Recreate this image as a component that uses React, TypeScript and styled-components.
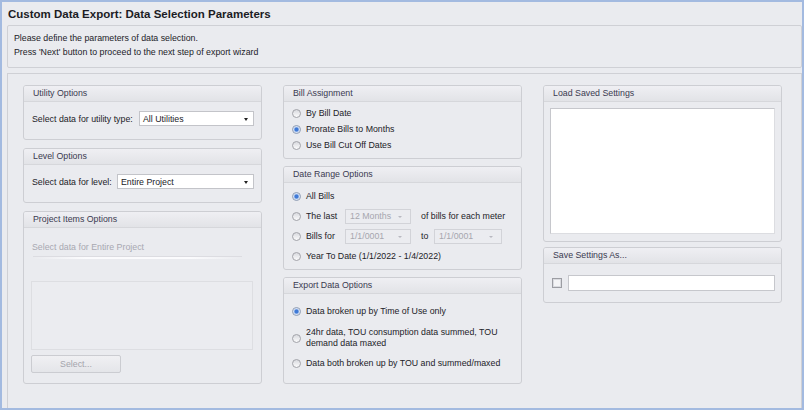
import { createGlobalStyle, styled } from 'styled-components';

const GlobalStyle = createGlobalStyle`
  html, body {
    margin: 0;
    padding: 0;
  }
  body {
    font-family: 'Liberation Sans', Arial, sans-serif;
    font-size: 8.8px;
    color: #222228;
    background: #eaebef;
  }
  * {
    box-sizing: border-box;
  }
`;

const Window = styled.div`
  width: 804px;
  height: 410px;
  border: 2px solid #a3bae0;
  background: #eaebef;
  display: flex;
  flex-direction: column;
  overflow: hidden;
`;

const TitleBar = styled.div`
  height: 23px;
  padding: 1px 0 0 6px;
  display: flex;
  align-items: center;
  font-size: 11.5px;
  font-weight: bold;
  color: #1c1c24;
`;

const Intro = styled.div`
  height: 43px;
  margin-left: 5px;
  padding: 5px 0 0 6px;
  border: 1px solid #cfd0d5;
  border-radius: 2px;
  line-height: 14px;
`;

const MainPanel = styled.div`
  flex: 1;
  margin: 5px 0 0 5px;
  padding: 11px 0 0 15px;
  border: 1px solid #cfd0d5;
  border-bottom: none;
  display: flex;
  align-items: flex-start;
  gap: 21px;
`;

const Column = styled.div<{ $gap: number }>`
  width: 239px;
  display: flex;
  flex-direction: column;
  gap: ${p => p.$gap}px;
`;

const GroupBox = styled.div<{ $h: number }>`
  height: ${p => p.$h}px;
  border: 1px solid #cdced3;
  border-radius: 3px;
  overflow: hidden;
  display: flex;
  flex-direction: column;
`;

const GroupHeader = styled.div`
  height: 16px;
  flex-shrink: 0;
  padding-left: 9px;
  line-height: 15px;
  border-bottom: 1px solid #d6d7db;
  background: linear-gradient(#efeff3, #e2e3e7);
  color: #3a3a50;
`;

const GroupBody = styled.div<{ $pad: string }>`
  flex: 1;
  padding: ${p => p.$pad};
  display: flex;
  flex-direction: column;
`;

const FieldRow = styled.div`
  height: 15px;
  display: flex;
  align-items: center;
  justify-content: space-between;
`;

const Select = styled.div<{ $w: number; $disabled?: boolean }>`
  position: relative;
  width: ${p => p.$w}px;
  height: 15px;
  flex-shrink: 0;
  display: flex;
  align-items: center;
  padding-left: ${p => (p.$disabled ? 4 : 3)}px;
  border: 1px solid ${p => (p.$disabled ? '#d2d3d8' : '#c3c4c9')};
  background: ${p => (p.$disabled ? '#ebecf0' : '#ffffff')};
  color: ${p => (p.$disabled ? '#a6a6ae' : '#222228')};

  &::after {
    content: '';
    position: absolute;
    right: ${p => (p.$disabled ? 8 : 5)}px;
    top: 6px;
    border-left: ${p => (p.$disabled ? 2 : 2.5)}px solid transparent;
    border-right: ${p => (p.$disabled ? 2 : 2.5)}px solid transparent;
    border-top: ${p => (p.$disabled ? 2 : 3)}px solid ${p => (p.$disabled ? '#b8b8c0' : '#222')};
  }
`;

const MutedText = styled.div`
  height: 12px;
  margin-left: 1px;
  line-height: 12px;
  color: #a8a8b1;
`;

const Separator = styled.div`
  height: 2px;
  width: 209px;
  margin: 4px 0 0 2px;
  background: linear-gradient(to right, rgba(255, 255, 255, 0), #fbfbfd 25%, #fbfbfd 75%, rgba(255, 255, 255, 0));
  box-shadow: 0 -1px 0 rgba(205, 206, 212, 0.5);
`;

const ItemsList = styled.div`
  height: 69px;
  margin-top: 22px;
  border: 1px solid #dddee2;
  background: #ebecf0;
`;

const Button = styled.div`
  width: 90px;
  height: 18px;
  margin-top: 5px;
  display: flex;
  align-items: center;
  justify-content: center;
  border: 1px solid #cbccd1;
  border-radius: 2px;
  background: linear-gradient(#f0f0f3, #e4e5e9);
  color: #a4a4ac;
`;

const OptionRow = styled.div<{ $h: number; $top?: number }>`
  min-height: ${p => p.$h}px;
  margin-top: ${p => p.$top ?? 0}px;
  display: flex;
  align-items: center;
  line-height: 11px;
  color: #222228;
`;

const Radio = styled.span<{ $on?: boolean }>`
  width: 9px;
  height: 9px;
  flex-shrink: 0;
  margin-right: 5px;
  border-radius: 50%;
  border: 1px solid ${p => (p.$on ? '#8d9bb3' : '#a2a3a9')};
  background: ${p =>
    p.$on
      ? 'radial-gradient(circle, #3f79d6 0, #3f79d6 1.6px, #a9c4ee 2.4px, #f3f5fa 3.5px)'
      : 'linear-gradient(#d9dadf, #fbfbfc)'};
`;

const RowLabel = styled.span<{ $w: number; $left?: number }>`
  width: ${p => p.$w}px;
  margin-left: ${p => p.$left ?? 0}px;
  flex-shrink: 0;
`;

const Trailing = styled.span`
  margin-left: 10px;
  white-space: nowrap;
`;

const SavedList = styled.div`
  height: 126px;
  border: 1px solid #c6c7cc;
  border-right-color: #dcdde1;
  border-bottom-color: #dcdde1;
  background: #ffffff;
`;

const SaveRow = styled.div`
  height: 16px;
  display: flex;
  align-items: center;
  gap: 6px;
`;

const Checkbox = styled.span`
  width: 10px;
  height: 10px;
  flex-shrink: 0;
  border: 1px solid #9c9da3;
  background: #f4f4f6;
  box-shadow: inset 0 0 0 1px #dadbe0;
`;

const TextInput = styled.div`
  flex: 1;
  height: 16px;
  border: 1px solid #c6c7cc;
  background: #ffffff;
`;

export default function App() {
  return (
    <>
      <GlobalStyle />
      <Window>
        <TitleBar>Custom Data Export: Data Selection Parameters</TitleBar>
        <Intro>
          <div>Please define the parameters of data selection.</div>
          <div>Press 'Next' button to proceed to the next step of export wizard</div>
        </Intro>
        <MainPanel>
          <Column $gap={8}>
            <GroupBox $h={55}>
              <GroupHeader>Utility Options</GroupHeader>
              <GroupBody $pad="9px 7px 0 8px">
                <FieldRow>
                  <span>Select data for utility type:</span>
                  <Select $w={115}>All Utilities</Select>
                </FieldRow>
              </GroupBody>
            </GroupBox>
            <GroupBox $h={55}>
              <GroupHeader>Level Options</GroupHeader>
              <GroupBody $pad="9px 7px 0 8px">
                <FieldRow>
                  <span>Select data for level:</span>
                  <Select $w={137}>Entire Project</Select>
                </FieldRow>
              </GroupBody>
            </GroupBox>
            <GroupBox $h={173}>
              <GroupHeader>Project Items Options</GroupHeader>
              <GroupBody $pad="13px 8px 0 7px">
                <MutedText>Select data for Entire Project</MutedText>
                <Separator />
                <ItemsList />
                <Button>Select...</Button>
              </GroupBody>
            </GroupBox>
          </Column>

          <Column $gap={7}>
            <GroupBox $h={74}>
              <GroupHeader>Bill Assignment</GroupHeader>
              <GroupBody $pad="3px 8px 0 8px">
                <OptionRow $h={16}>
                  <Radio />
                  By Bill Date
                </OptionRow>
                <OptionRow $h={16}>
                  <Radio $on />
                  Prorate Bills to Months
                </OptionRow>
                <OptionRow $h={16}>
                  <Radio />
                  Use Bill Cut Off Dates
                </OptionRow>
              </GroupBody>
            </GroupBox>
            <GroupBox $h={104}>
              <GroupHeader>Date Range Options</GroupHeader>
              <GroupBody $pad="3px 8px 0 8px">
                <OptionRow $h={20}>
                  <Radio $on />
                  All Bills
                </OptionRow>
                <OptionRow $h={20}>
                  <Radio />
                  <RowLabel $w={39}>The last</RowLabel>
                  <Select $w={66} $disabled>
                    12 Months
                  </Select>
                  <Trailing>of bills for each meter</Trailing>
                </OptionRow>
                <OptionRow $h={20}>
                  <Radio />
                  <RowLabel $w={39}>Bills for</RowLabel>
                  <Select $w={66} $disabled>
                    1/1/0001
                  </Select>
                  <RowLabel $w={13} $left={10}>
                    to
                  </RowLabel>
                  <Select $w={68} $disabled>
                    1/1/0001
                  </Select>
                </OptionRow>
                <OptionRow $h={20}>
                  <Radio />
                  Year To Date (1/1/2022 - 1/4/2022)
                </OptionRow>
              </GroupBody>
            </GroupBox>
            <GroupBox $h={107}>
              <GroupHeader>Export Data Options</GroupHeader>
              <GroupBody $pad="9px 8px 0 8px">
                <OptionRow $h={16}>
                  <Radio $on />
                  Data broken up by Time of Use only
                </OptionRow>
                <OptionRow $h={22} $top={8}>
                  <Radio />
                  <span>
                    24hr data, TOU consumption data summed, TOU
                    <br />
                    demand data maxed
                  </span>
                </OptionRow>
                <OptionRow $h={16} $top={6}>
                  <Radio />
                  Data both broken up by TOU and summed/maxed
                </OptionRow>
              </GroupBody>
            </GroupBox>
          </Column>

          <Column $gap={5}>
            <GroupBox $h={157}>
              <GroupHeader>Load Saved Settings</GroupHeader>
              <GroupBody $pad="6px 6px 0 6px">
                <SavedList />
              </GroupBody>
            </GroupBox>
            <GroupBox $h={56}>
              <GroupHeader>Save Settings As...</GroupHeader>
              <GroupBody $pad="11px 6px 0 8px">
                <SaveRow>
                  <Checkbox />
                  <TextInput />
                </SaveRow>
              </GroupBody>
            </GroupBox>
          </Column>
        </MainPanel>
      </Window>
    </>
  );
}
